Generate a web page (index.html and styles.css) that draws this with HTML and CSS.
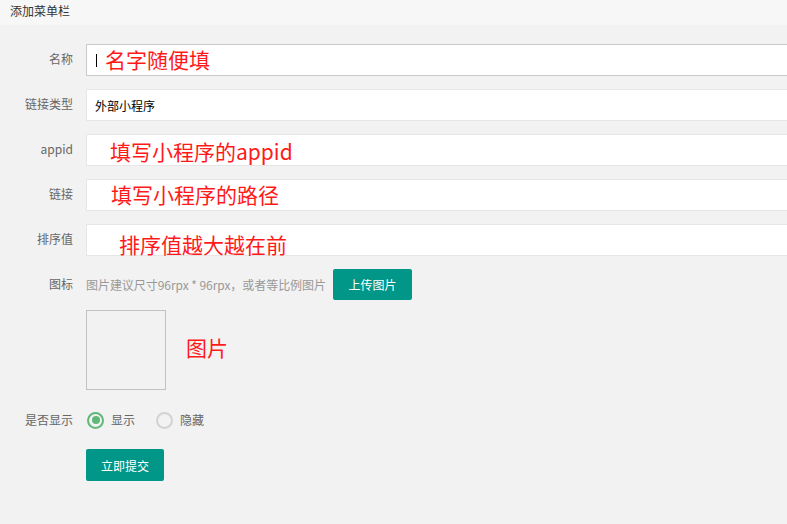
FILE: index.html
```html
<!DOCTYPE html>
<html lang="zh">
<head>
<meta charset="utf-8">
<title>添加菜单栏</title>
<link rel="stylesheet" href="styles.css">
</head>
<body>
<div class="header">添加菜单栏</div>
<div class="form">
  <div class="row">
    <div class="label">名称</div>
    <div class="field focus"><span class="caret"></span><span class="note n1">名字随便填</span></div>
  </div>
  <div class="row">
    <div class="label">链接类型</div>
    <div class="field"><span class="value">外部小程序</span></div>
  </div>
  <div class="row">
    <div class="label">appid</div>
    <div class="field"><span class="note n3">填写小程序的appid</span></div>
  </div>
  <div class="row">
    <div class="label">链接</div>
    <div class="field"><span class="note n4">填写小程序的路径</span></div>
  </div>
  <div class="row">
    <div class="label">排序值</div>
    <div class="field"><span class="note n5">排序值越大越在前</span></div>
  </div>
  <div class="row icon-row">
    <div class="label">图标</div>
    <div class="hint">图片建议尺寸96rpx * 96rpx，或者等比例图片</div>
    <button class="btn upload">上传图片</button>
  </div>
  <div class="preview-row">
    <div class="preview"></div>
    <span class="note big">图片</span>
  </div>
  <div class="row radio-row">
    <div class="label">是否显示</div>
    <div class="radio checked"><span class="circle"></span><span class="rtext">显示</span></div>
    <div class="radio"><span class="circle"></span><span class="rtext">隐藏</span></div>
  </div>
  <div class="submit-row">
    <button class="btn submit">立即提交</button>
  </div>
</div>
</body>
</html>
```

FILE: styles.css
```css
* { box-sizing: border-box; }
body {
  margin: 0;
  background: #f2f2f2;
  font-family: "Noto Sans CJK SC", "Liberation Sans", sans-serif;
  font-size: 12px;
  color: #666;
}
.header {
  height: 25px;
  line-height: 22px;
  padding-left: 10px;
  background: #f7f7f7;
  color: #333;
  font-size: 12px;
}
.form {
  padding-top: 19px;
}
.row {
  display: flex;
  align-items: center;
  margin-bottom: 13px;
}
.label {
  width: 73px;
  margin-right: 13px;
  text-align: right;
  color: #666;
  font-size: 12px;
  flex-shrink: 0;
  position: relative;
  top: -2px;
}
.field {
  flex: 1;
  height: 32px;
  background: #fff;
  border: 1px solid #e6e6e6;
  border-right: none;
  display: flex;
  align-items: center;
  white-space: nowrap;
  overflow: visible;
}
.field.focus {
  border-color: #c9c9c9;
}
.caret {
  display: inline-block;
  width: 1px;
  height: 13px;
  background: #000;
  margin-left: 9px;
}
.value {
  margin-left: 8px;
  color: #000;
  font-size: 12px;
}
.note {
  color: #ff1a1a;
  font-size: 21px;
  line-height: 1;
}
.n1 { margin-left: 8px; position: relative; top: -1px; }
.n3 { margin-left: 23px; position: relative; top: 1px; }
.n4 { margin-left: 24px; position: relative; top: -1px; }
.n5 { margin-left: 32px; position: relative; top: 4px; }
.icon-row {
  margin-bottom: 0;
}
.icon-row .label { top: -1px; }
.hint {
  color: #999;
  font-size: 12px;
  letter-spacing: -0.05px;
}
.btn {
  border: none;
  background: #009688;
  color: #fff;
  font-family: inherit;
  font-size: 12px;
  border-radius: 2px;
  padding: 0;
  cursor: pointer;
}
.upload {
  width: 79px;
  height: 31px;
  margin-left: 7px;
}
.preview-row {
  display: flex;
  align-items: center;
  margin: 10px 0 0 86px;
}
.preview {
  width: 80px;
  height: 80px;
  border: 1px solid #c2c2c2;
}
.big {
  margin-left: 20px;
  position: relative;
  top: -3px;
}
.radio-row {
  margin-top: 20px;
  margin-bottom: 0;
  height: 20px;
}
.radio-row .label { top: -1px; }
.radio {
  display: flex;
  align-items: center;
  margin-right: 20px;
  margin-left: 1px;
}
.circle {
  width: 17px;
  height: 17px;
  border-radius: 50%;
  border: 2px solid #d2d2d2;
  display: flex;
  align-items: center;
  justify-content: center;
}
.radio.checked .circle {
  border-color: #5fb878;
}
.radio.checked .circle::after {
  content: "";
  width: 8px;
  height: 8px;
  border-radius: 50%;
  background: #5fb878;
}
.rtext {
  margin-left: 7px;
  color: #666;
  position: relative;
  top: -1px;
}
.submit-row {
  margin: 19px 0 0 86px;
}
.submit {
  width: 78px;
  height: 32px;
}
```
